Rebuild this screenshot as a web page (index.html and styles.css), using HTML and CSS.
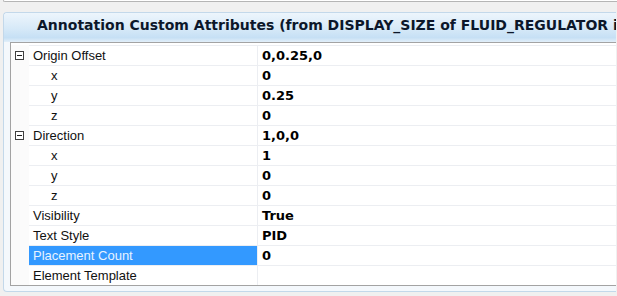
FILE: index.html
```html
<!DOCTYPE html>
<html>
<head>
<meta charset="utf-8">
<title>Annotation Custom Attributes</title>
<link rel="stylesheet" href="styles.css">
</head>
<body>
<div class="topbox"></div>
<div class="panel">
  <div class="header">Annotation Custom Attributes (from DISPLAY_SIZE of FLUID_REGULATOR i</div>
  <div class="grid">
    <div class="row">
      <div class="gut"><svg class="exp" width="9" height="9" viewBox="0 0 9 9"><rect x="0.5" y="0.5" width="8" height="8" fill="#fff" stroke="#404040"/><path d="M2 4.5H7" stroke="#202020"/></svg></div>
      <div class="name">Origin Offset</div><div class="val">0,0.25,0</div>
    </div>
    <div class="row"><div class="gut"></div><div class="name child">x</div><div class="val">0</div></div>
    <div class="row"><div class="gut"></div><div class="name child">y</div><div class="val">0.25</div></div>
    <div class="row"><div class="gut"></div><div class="name child">z</div><div class="val">0</div></div>
    <div class="row">
      <div class="gut"><svg class="exp" width="9" height="9" viewBox="0 0 9 9"><rect x="0.5" y="0.5" width="8" height="8" fill="#fff" stroke="#404040"/><path d="M2 4.5H7" stroke="#202020"/></svg></div>
      <div class="name">Direction</div><div class="val">1,0,0</div>
    </div>
    <div class="row"><div class="gut"></div><div class="name child">x</div><div class="val">1</div></div>
    <div class="row"><div class="gut"></div><div class="name child">y</div><div class="val">0</div></div>
    <div class="row"><div class="gut"></div><div class="name child">z</div><div class="val">0</div></div>
    <div class="row"><div class="gut"></div><div class="name">Visibility</div><div class="val">True</div></div>
    <div class="row"><div class="gut"></div><div class="name">Text Style</div><div class="val">PID</div></div>
    <div class="row"><div class="gut"></div><div class="name sel">Placement Count</div><div class="val">0</div></div>
    <div class="row"><div class="gut"></div><div class="name">Element Template</div><div class="val"></div></div>
  </div>
</div>
</body>
</html>
```
FILE: styles.css
```css
html, body {
  margin: 0;
  padding: 0;
}
body {
  background: #f0f0f0;
  width: 617px;
  height: 296px;
  overflow: hidden;
  font-family: "Liberation Sans", Arial, sans-serif;
}
.topbox {
  margin-left: 3px;
  height: 1px;
  background: #fff;
  border-left: 1px solid #b5b5b5;
  border-bottom: 1px solid #b5b5b5;
  border-bottom-left-radius: 2px;
  margin-bottom: 10px;
}
.panel {
  margin-left: 3px;
  width: 613px;
  box-sizing: border-box;
  border: 1px solid #c3d8ea;
  border-right: none;
  border-radius: 4px 0 0 4px;
  background: #f4f8fc;
  padding-bottom: 5px;
  overflow: hidden;
}
.header {
  height: 29px;
  box-sizing: border-box;
  padding: 4px 0 0 33px;
  line-height: 17px;
  font-family: "DejaVu Sans", Verdana, sans-serif;
  font-weight: bold;
  font-size: 14px;
  color: #0c172a;
  white-space: nowrap;
  overflow: hidden;
  background: linear-gradient(#edf5fc, #d6e9f8 55%, #c6e0f5 85%, #e2eff9);
  border-radius: 3px 0 0 0;
}
.grid {
  margin-left: 6px;
  border: 1px solid #a3a3a3;
  border-right: none;
  background: #fff;
  padding-top: 2px;
}
.row {
  display: flex;
  height: 20px;
}
.gut {
  width: 18px;
  flex: none;
  background: #fbfbfb;
  display: flex;
  align-items: center;
  padding-left: 4px;
  box-sizing: border-box;
}
.exp {
  display: block;
}
.name {
  width: 229px;
  flex: none;
  box-sizing: border-box;
  border-top: 1px solid #eceef2;
  border-right: 1px solid #eceef2;
  padding-left: 4px;
  line-height: 19px;
  font-size: 13px;
  color: #111;
  white-space: nowrap;
}
.name.child {
  padding-left: 22px;
}
.name.sel {
  background: #3399ff;
  color: #e8f3ff;
}
.val {
  flex: 1;
  min-width: 0;
  border-top: 1px solid #eceef2;
  padding-left: 4px;
  line-height: 19px;
  font-family: "DejaVu Sans", Verdana, sans-serif;
  font-weight: bold;
  font-size: 13px;
  color: #000;
  white-space: nowrap;
}
```
